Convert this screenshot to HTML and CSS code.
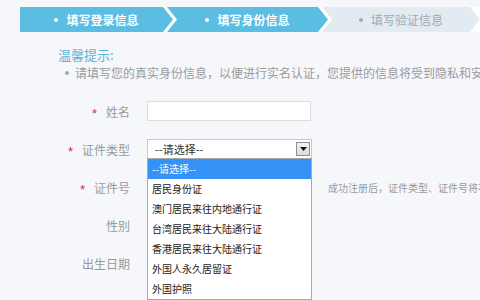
FILE: index.html
```html
<!DOCTYPE html>
<html lang="zh-CN">
<head>
<meta charset="utf-8">
<title>填写身份信息</title>
<link rel="stylesheet" href="styles.css">
</head>
<body>
<div class="steps">
  <div class="step step-first done"><span class="dot"></span>填写登录信息</div>
  <div class="step step-mid done"><span class="dot"></span>填写身份信息</div>
  <div class="step step-last"><span class="dot"></span>填写验证信息</div>
</div>

<div class="tips">
  <div class="tips-title">温馨提示:</div>
  <div class="tips-line"><span class="tips-dot"></span>请填写您的真实身份信息，以便进行实名认证，您提供的信息将受到隐私和安全保护</div>
</div>

<div class="form">
  <div class="row">
    <div class="label"><span class="star">*</span>姓名</div>
    <div class="field"><div class="input"></div></div>
  </div>
  <div class="row">
    <div class="label"><span class="star">*</span>证件类型</div>
    <div class="field">
      <div class="select">
        <span class="select-text">--请选择--</span>
        <span class="select-btn"><svg width="7" height="4" viewBox="0 0 7 4"><path d="M0 0H7L3.5 4Z" fill="#111"/></svg></span>
        <ul class="dropdown">
          <li class="active">--请选择--</li>
          <li>居民身份证</li>
          <li>澳门居民来往内地通行证</li>
          <li>台湾居民来往大陆通行证</li>
          <li>香港居民来往大陆通行证</li>
          <li>外国人永久居留证</li>
          <li>外国护照</li>
        </ul>
      </div>
    </div>
  </div>
  <div class="row">
    <div class="label"><span class="star">*</span>证件号</div>
    <div class="field"><div class="input"></div><span class="hint">成功注册后，证件类型、证件号将不可修改</span></div>
  </div>
  <div class="row">
    <div class="label">性别</div>
    <div class="field"></div>
  </div>
  <div class="row">
    <div class="label">出生日期</div>
    <div class="field"></div>
  </div>
</div>
</body>
</html>
```

FILE: styles.css
```css
html, body {
  margin: 0;
  padding: 0;
}
body {
  width: 480px;
  height: 300px;
  overflow: hidden;
  background: #f6f7fa;
  font-family: "Noto Sans CJK SC", "Liberation Sans", sans-serif;
}

.steps {
  display: flex;
  height: 25px;
  margin: 7px 0 0 20px;
  background: #ffffff;
  white-space: nowrap;
}
.step {
  flex: none;
  display: flex;
  align-items: center;
  justify-content: center;
  height: 25px;
  font-size: 12px;
  color: #a3a9ae;
  background: #e3ebf2;
}
.step.done {
  background: #5bbde2;
  color: #ffffff;
  font-weight: bold;
}
.dot {
  width: 4px;
  height: 4px;
  border-radius: 50%;
  background: currentColor;
  margin-right: 8px;
}
.step-first {
  width: 153px;
  clip-path: polygon(0 0, calc(100% - 10px) 0, 100% 50%, calc(100% - 10px) 100%, 0 100%);
}
.step-mid {
  width: 161px;
  margin-left: -6px;
  clip-path: polygon(0 0, calc(100% - 10px) 0, 100% 50%, calc(100% - 10px) 100%, 0 100%, 10px 50%);
}
.step-last {
  width: 158px;
  margin-left: -6px;
  clip-path: polygon(0 0, calc(100% - 10px) 0, 100% 50%, calc(100% - 10px) 100%, 0 100%, 10px 50%);
}

.tips {
  margin: 14px 0 0 58px;
  white-space: nowrap;
}
.tips-title {
  font-size: 13px;
  line-height: 18px;
  color: #5ab4d6;
}
.tips-line {
  display: flex;
  align-items: center;
  font-size: 12px;
  line-height: 18px;
  color: #9a9a9a;
  margin-left: 7px;
}
.tips-dot {
  flex: none;
  width: 4px;
  height: 4px;
  border-radius: 50%;
  background: #a8a8a8;
  margin-right: 6px;
}

.form {
  margin-top: 10px;
}
.row {
  display: flex;
  align-items: center;
  height: 38px;
}
.label {
  width: 130px;
  flex: none;
  display: flex;
  justify-content: flex-end;
  align-items: center;
  font-size: 12px;
  color: #9a9a9a;
}
.star {
  font-family: "Liberation Sans", sans-serif;
  font-size: 13px;
  color: #c8324f;
  margin-right: 9px;
  padding-top: 4px;
}
.field {
  margin-left: 17px;
  display: flex;
  align-items: center;
  white-space: nowrap;
}
.input {
  width: 162px;
  height: 18px;
  background: #ffffff;
  border: 1px solid #dcdcdc;
}
.hint {
  margin-left: 17px;
  font-size: 10px;
  color: #9a9a9a;
}

.select {
  position: relative;
  width: 163px;
  height: 18px;
  background: #ffffff;
  border: 1px solid #c9c9c9;
  display: flex;
  align-items: center;
  justify-content: space-between;
}
.select-text {
  font-size: 11px;
  color: #333333;
  padding-left: 7px;
}
.select-btn {
  width: 12px;
  height: 12px;
  margin-right: 1px;
  border: 1px solid #8f8f8f;
  background: linear-gradient(#f3f3f3, #dcdcdc);
  display: flex;
  align-items: center;
  justify-content: center;
}
.dropdown {
  position: absolute;
  top: 100%;
  left: -1px;
  width: 163px;
  margin: 0;
  padding: 0;
  list-style: none;
  background: #ffffff;
  border: 1px solid #a9a9a9;
  z-index: 2;
}
.dropdown li {
  height: 20px;
  line-height: 20px;
  font-size: 10px;
  color: #222222;
  padding-left: 4px;
}
.dropdown li.active {
  background: #3592f6;
  color: #ffffff;
}
```
